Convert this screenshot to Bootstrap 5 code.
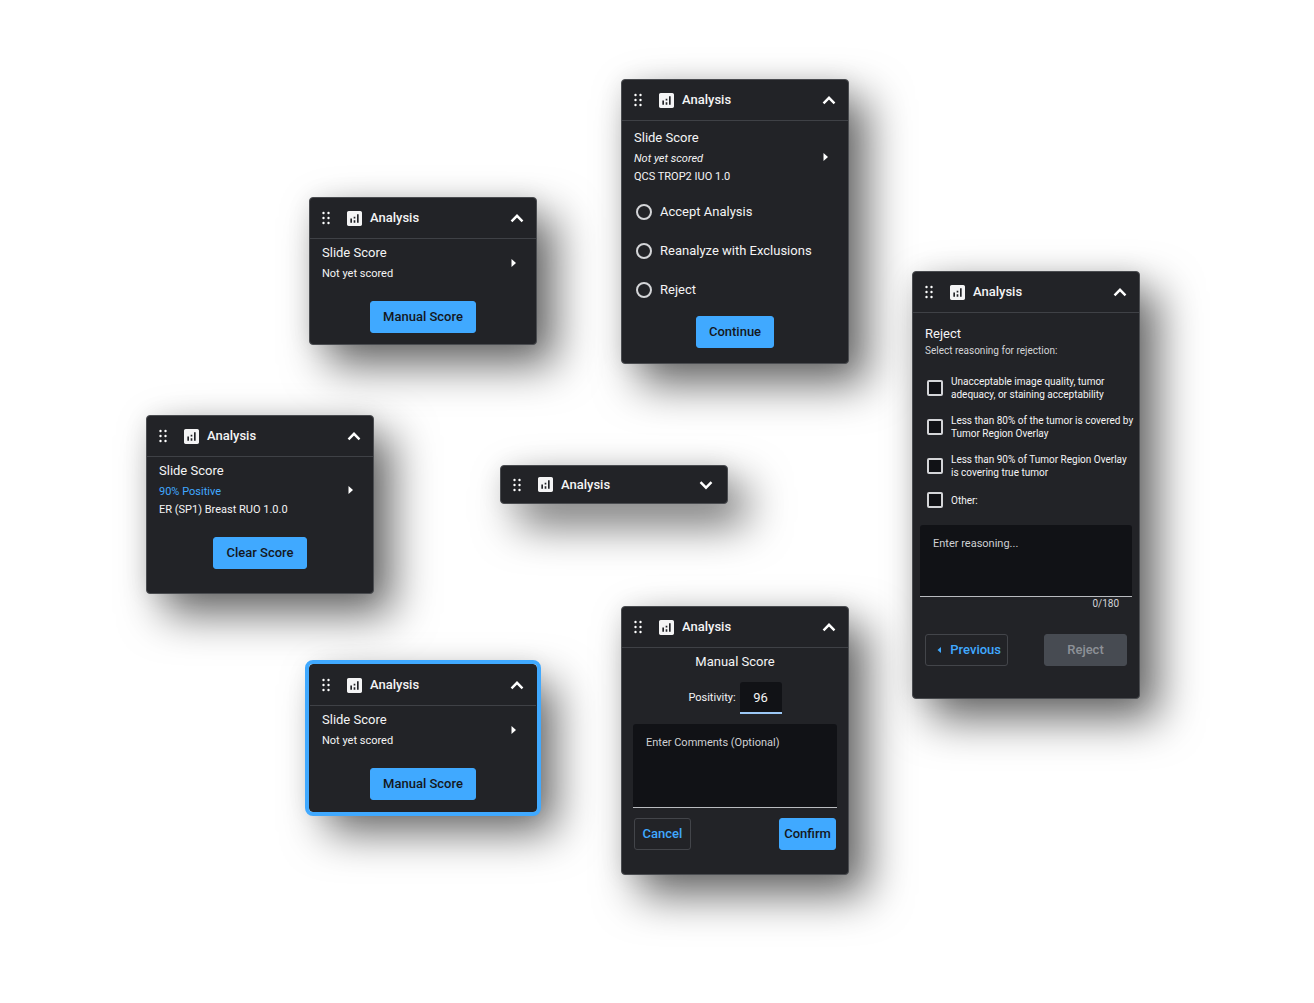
<!DOCTYPE html>
<html lang="en">
<head>
<meta charset="utf-8">
<meta name="viewport" content="width=device-width, initial-scale=1">
<title>Analysis panel states</title>
<link href="https://cdn.jsdelivr.net/npm/bootstrap@5.3.0/dist/css/bootstrap.min.css" rel="stylesheet">
<style>
  :root { --surface: #222327; --well: #111216; --line: #3f4146; --accent: #40a9ff; --ink: #f4f4f5; }
  body { background: #fff; color: var(--ink); font-family: Roboto, "Noto Sans", sans-serif; font-size: 11px; line-height: 18px; }

  /* Board: staggered, overlapping columns of panels */
  .board { display: grid; grid-template-columns: minmax(0,163fr) minmax(0,191fr) minmax(0,121fr) minmax(0,291fr) 228px; padding: 0 174px 64px 146px; }
  .stack-a { padding-top: 415px; }
  .stack-b { padding-top: 197px; gap: 319px; }
  .stack-c { padding-top: 465px; }
  .stack-d { padding-top: 79px; gap: 242px; }
  .stack-e { padding-top: 271px; }

  .panel { width: 228px; background: var(--surface); border: 1px solid #4a4c50; border-radius: 4px; box-shadow: 18px 20px 44px rgba(0,0,0,.6), 0 0 24px rgba(0,0,0,.08); }
  .panel-focus { outline: 4px solid var(--accent); border-color: var(--surface); }
  .panel-head { height: 41px; padding: 0 12px 0 10px; border-bottom: 1px solid var(--line); }
  .panel-collapsed .panel-head { height: 37px; padding-right: 14px; border-bottom: 0; }
  .head-icon { margin: 0 8px 0 15px; }
  .panel-title { font-size: 13px; line-height: 20px; font-weight: 500; margin: 0; }
  .panel-body { padding: 4px 12px 11px; }
  .body-roomy { padding-top: 7px; padding-bottom: 15px; }
  .body-tall { padding-bottom: 24px; }
  .body-reject { padding-top: 11px; padding-bottom: 32px; }
  .heading { font-size: 13px; line-height: 20px; font-weight: 400; margin: 0; }
  .score-text { margin-top: 2px; }
  .text-accent { color: var(--accent); }
  .fine { font-size: 10px; line-height: 13px; color: #d4d5d8; }

  .icon-btn { display: flex; padding: 0; border: 0; background: none; color: #fff; }
  svg { display: block; fill: currentColor; }

  .btn-panel { --bs-btn-font-size: 13px; --bs-btn-font-weight: 500; --bs-btn-line-height: 20px; --bs-btn-padding-y: 5px; --bs-btn-padding-x: 12px; --bs-btn-border-radius: 3px; }
  .btn-fill { --bs-btn-bg: var(--accent); --bs-btn-border-color: var(--accent); --bs-btn-color: #14171c; --bs-btn-hover-bg: #63b9ff; --bs-btn-hover-color: #14171c;
    --bs-btn-disabled-bg: #474b52; --bs-btn-disabled-border-color: #474b52; --bs-btn-disabled-color: #8d9197; --bs-btn-disabled-opacity: 1; }
  .btn-line { --bs-btn-border-color: #43454a; --bs-btn-color: var(--accent); --bs-btn-hover-color: #63b9ff; --bs-btn-hover-border-color: #63b9ff; }
  .btn-tight { --bs-btn-padding-x: 4px; min-width: 57px; }
  .btn-wide { width: 83px; --bs-btn-padding-x: 6px; }
  .action { margin-top: 18px; }

  .choices { display: flex; flex-direction: column; gap: 19px; margin-top: 16px; }
  .choice { display: flex; align-items: center; gap: 8px; font-size: 13px; line-height: 20px; padding-left: 2px; }
  .checks { gap: 13px; margin-top: 18px; }
  .checks .choice { font-size: 10px; line-height: 13px; white-space: nowrap; }
  .choice .form-check-input { flex: none; width: 16px; height: 16px; margin: 0; background-color: transparent; border: 2px solid #d4d5d8; }
  .checks .choice .form-check-input { background-color: var(--well); border-radius: 2px; }

  .positivity-row { margin-top: 10px; }
  .well { background: var(--well); color: var(--ink); border: 0; border-bottom: 1px solid #b9bbbf; border-radius: 3px 3px 0 0; font-size: 11px; line-height: 16px; padding: 11px 13px; resize: none; display: block; }
  .well:focus { background: var(--well); color: var(--ink); box-shadow: none; }
  .well::placeholder { color: #cfd0d3; }
  .well-reason { height: 72px; width: auto; align-self: stretch; margin: 17px -5px 0; }
  .well-comment { height: 84px; width: auto; align-self: stretch; margin: 10px -1px; }
  .well-number { width: 42px; height: 32px; padding: 0; text-align: center; font-size: 13px; border-bottom: 2px solid #9cc7f5; }

  @media (max-width: 1100px) {
    .board { display: flex; flex-wrap: wrap; gap: 48px; padding: 48px; }
    .board > div { padding-top: 0; gap: 48px; }
  }
</style>
</head>
<body>
<svg class="d-none" aria-hidden="true">
  <symbol id="grip" viewBox="0 0 12 16"><circle cx="3.500" cy="3" r="1.200"/><circle cx="8.500" cy="3" r="1.200"/><circle cx="3.500" cy="8" r="1.200"/><circle cx="8.500" cy="8" r="1.200"/><circle cx="3.500" cy="13" r="1.200"/><circle cx="8.500" cy="13" r="1.200"/></symbol>
  <symbol id="chart" viewBox="3 3 18 18"><path d="M19 3H5c-1.100 0-2 .9-2 2v14c0 1.100.9 2 2 2h14c1.100 0 2-.9 2-2V5c0-1.100-.9-2-2-2zM9 17H7v-5h2v5zm4 0h-2v-3h2v3zm0-5h-2v-2h2v2zm4 5h-2V7h2v10z"/></symbol>
  <symbol id="up" viewBox="0 0 14 14"><path d="M1.500 10.300 7 4.800l5.500 5.500" fill="none" stroke="currentColor" stroke-width="2.400"/></symbol>
  <symbol id="down" viewBox="0 0 14 14"><path d="M1.500 4.200 7 9.700l5.500-5.500" fill="none" stroke="currentColor" stroke-width="2.400"/></symbol>
  <symbol id="next" viewBox="0 0 6 10"><path d="M1.500 1v8l4.500-4z"/></symbol>
  <symbol id="prev" viewBox="0 0 6 10"><path d="M5 2v6L1.500 5z"/></symbol>
</svg>

<main class="board min-vh-100">
  <div class="stack-a d-flex flex-column">
    <section class="panel">
      <header class="panel-head d-flex align-items-center">
        <button class="icon-btn" aria-label="Move panel"><svg width="12" height="16"><use href="#grip"/></svg></button>
        <svg class="head-icon" width="15" height="15"><use href="#chart"/></svg>
        <h2 class="panel-title">Analysis</h2>
        <button class="icon-btn ms-auto" aria-label="Collapse"><svg width="14" height="14"><use href="#up"/></svg></button>
      </header>
      <div class="panel-body body-tall d-flex flex-column">
        <div class="d-flex align-items-center justify-content-between">
          <div>
            <h3 class="heading">Slide Score</h3>
            <div class="score-text text-accent">90% Positive</div>
            <div>ER (SP1) Breast RUO 1.0.0</div>
          </div>
          <button class="icon-btn me-2" aria-label="Score details"><svg width="6" height="10"><use href="#next"/></svg></button>
        </div>
        <button class="btn btn-panel btn-fill action align-self-center">Clear Score</button>
      </div>
    </section>
  </div>

  <div class="stack-b d-flex flex-column">
    <section class="panel">
      <header class="panel-head d-flex align-items-center">
        <button class="icon-btn" aria-label="Move panel"><svg width="12" height="16"><use href="#grip"/></svg></button>
        <svg class="head-icon" width="15" height="15"><use href="#chart"/></svg>
        <h2 class="panel-title">Analysis</h2>
        <button class="icon-btn ms-auto" aria-label="Collapse"><svg width="14" height="14"><use href="#up"/></svg></button>
      </header>
      <div class="panel-body d-flex flex-column">
        <div class="d-flex align-items-center justify-content-between">
          <div>
            <h3 class="heading">Slide Score</h3>
            <div class="score-text">Not yet scored</div>
          </div>
          <button class="icon-btn me-2" aria-label="Score details"><svg width="6" height="10"><use href="#next"/></svg></button>
        </div>
        <button class="btn btn-panel btn-fill action align-self-center">Manual Score</button>
      </div>
    </section>
    <section class="panel panel-focus">
      <header class="panel-head d-flex align-items-center">
        <button class="icon-btn" aria-label="Move panel"><svg width="12" height="16"><use href="#grip"/></svg></button>
        <svg class="head-icon" width="15" height="15"><use href="#chart"/></svg>
        <h2 class="panel-title">Analysis</h2>
        <button class="icon-btn ms-auto" aria-label="Collapse"><svg width="14" height="14"><use href="#up"/></svg></button>
      </header>
      <div class="panel-body d-flex flex-column">
        <div class="d-flex align-items-center justify-content-between">
          <div>
            <h3 class="heading">Slide Score</h3>
            <div class="score-text">Not yet scored</div>
          </div>
          <button class="icon-btn me-2" aria-label="Score details"><svg width="6" height="10"><use href="#next"/></svg></button>
        </div>
        <button class="btn btn-panel btn-fill action align-self-center">Manual Score</button>
      </div>
    </section>
  </div>

  <div class="stack-c d-flex flex-column">
    <section class="panel panel-collapsed">
      <header class="panel-head d-flex align-items-center">
        <button class="icon-btn" aria-label="Move panel"><svg width="12" height="16"><use href="#grip"/></svg></button>
        <svg class="head-icon" width="15" height="15"><use href="#chart"/></svg>
        <h2 class="panel-title">Analysis</h2>
        <button class="icon-btn ms-auto" aria-label="Expand"><svg width="14" height="14"><use href="#down"/></svg></button>
      </header>
    </section>
  </div>

  <div class="stack-d d-flex flex-column">
    <section class="panel">
      <header class="panel-head d-flex align-items-center">
        <button class="icon-btn" aria-label="Move panel"><svg width="12" height="16"><use href="#grip"/></svg></button>
        <svg class="head-icon" width="15" height="15"><use href="#chart"/></svg>
        <h2 class="panel-title">Analysis</h2>
        <button class="icon-btn ms-auto" aria-label="Collapse"><svg width="14" height="14"><use href="#up"/></svg></button>
      </header>
      <div class="panel-body body-roomy d-flex flex-column">
        <div class="d-flex align-items-center justify-content-between">
          <div>
            <h3 class="heading">Slide Score</h3>
            <div class="score-text fst-italic">Not yet scored</div>
            <div>QCS TROP2 IUO 1.0</div>
          </div>
          <button class="icon-btn me-2" aria-label="Score details"><svg width="6" height="10"><use href="#next"/></svg></button>
        </div>
        <div class="choices" role="radiogroup" aria-label="Decision">
          <label class="choice" for="accept"><input class="form-check-input" type="radio" name="decision" id="accept">Accept Analysis</label>
          <label class="choice" for="reanalyze"><input class="form-check-input" type="radio" name="decision" id="reanalyze">Reanalyze with Exclusions</label>
          <label class="choice" for="reject"><input class="form-check-input" type="radio" name="decision" id="reject">Reject</label>
        </div>
        <button class="btn btn-panel btn-fill align-self-center mt-3">Continue</button>
      </div>
    </section>
    <section class="panel">
      <header class="panel-head d-flex align-items-center">
        <button class="icon-btn" aria-label="Move panel"><svg width="12" height="16"><use href="#grip"/></svg></button>
        <svg class="head-icon" width="15" height="15"><use href="#chart"/></svg>
        <h2 class="panel-title">Analysis</h2>
        <button class="icon-btn ms-auto" aria-label="Collapse"><svg width="14" height="14"><use href="#up"/></svg></button>
      </header>
      <div class="panel-body body-tall d-flex flex-column">
        <h3 class="heading text-center">Manual Score</h3>
        <div class="positivity-row d-flex align-items-center justify-content-center gap-1">
          <label for="positivity">Positivity:</label>
          <input class="form-control well well-number" id="positivity" type="text" inputmode="numeric" value="96">
        </div>
        <textarea class="form-control well well-comment" aria-label="Comments" placeholder="Enter Comments (Optional)"></textarea>
        <div class="d-flex justify-content-between">
          <button class="btn btn-panel btn-line btn-tight">Cancel</button>
          <button class="btn btn-panel btn-fill btn-tight">Confirm</button>
        </div>
      </div>
    </section>
  </div>

  <div class="stack-e d-flex flex-column">
    <section class="panel">
      <header class="panel-head d-flex align-items-center">
        <button class="icon-btn" aria-label="Move panel"><svg width="12" height="16"><use href="#grip"/></svg></button>
        <svg class="head-icon" width="15" height="15"><use href="#chart"/></svg>
        <h2 class="panel-title">Analysis</h2>
        <button class="icon-btn ms-auto" aria-label="Collapse"><svg width="14" height="14"><use href="#up"/></svg></button>
      </header>
      <div class="panel-body body-reject d-flex flex-column">
        <h3 class="heading">Reject</h3>
        <div class="fine">Select reasoning for rejection:</div>
        <div class="choices checks">
          <label class="choice" for="quality"><input class="form-check-input" type="checkbox" id="quality"><span>Unacceptable image quality, tumor<br>adequacy, or staining acceptability</span></label>
          <label class="choice" for="cover80"><input class="form-check-input" type="checkbox" id="cover80"><span>Less than 80% of the tumor is covered by<br>Tumor Region Overlay</span></label>
          <label class="choice" for="cover90"><input class="form-check-input" type="checkbox" id="cover90"><span>Less than 90% of Tumor Region Overlay<br>is covering true tumor</span></label>
          <label class="choice" for="other"><input class="form-check-input" type="checkbox" id="other">Other:</label>
        </div>
        <textarea class="form-control well well-reason" aria-label="Reasoning" maxlength="180" placeholder="Enter reasoning..."></textarea>
        <div class="fine text-end pe-2">0/180</div>
        <div class="d-flex justify-content-between mt-4">
          <button class="btn btn-panel btn-line btn-wide d-flex align-items-center justify-content-end gap-2"><svg width="6" height="10"><use href="#prev"/></svg>Previous</button>
          <button class="btn btn-panel btn-fill btn-wide" disabled>Reject</button>
        </div>
      </div>
    </section>
  </div>
</main>
<script src="https://cdn.jsdelivr.net/npm/bootstrap@5.3.0/dist/js/bootstrap.bundle.min.js"></script>
</body>
</html>
